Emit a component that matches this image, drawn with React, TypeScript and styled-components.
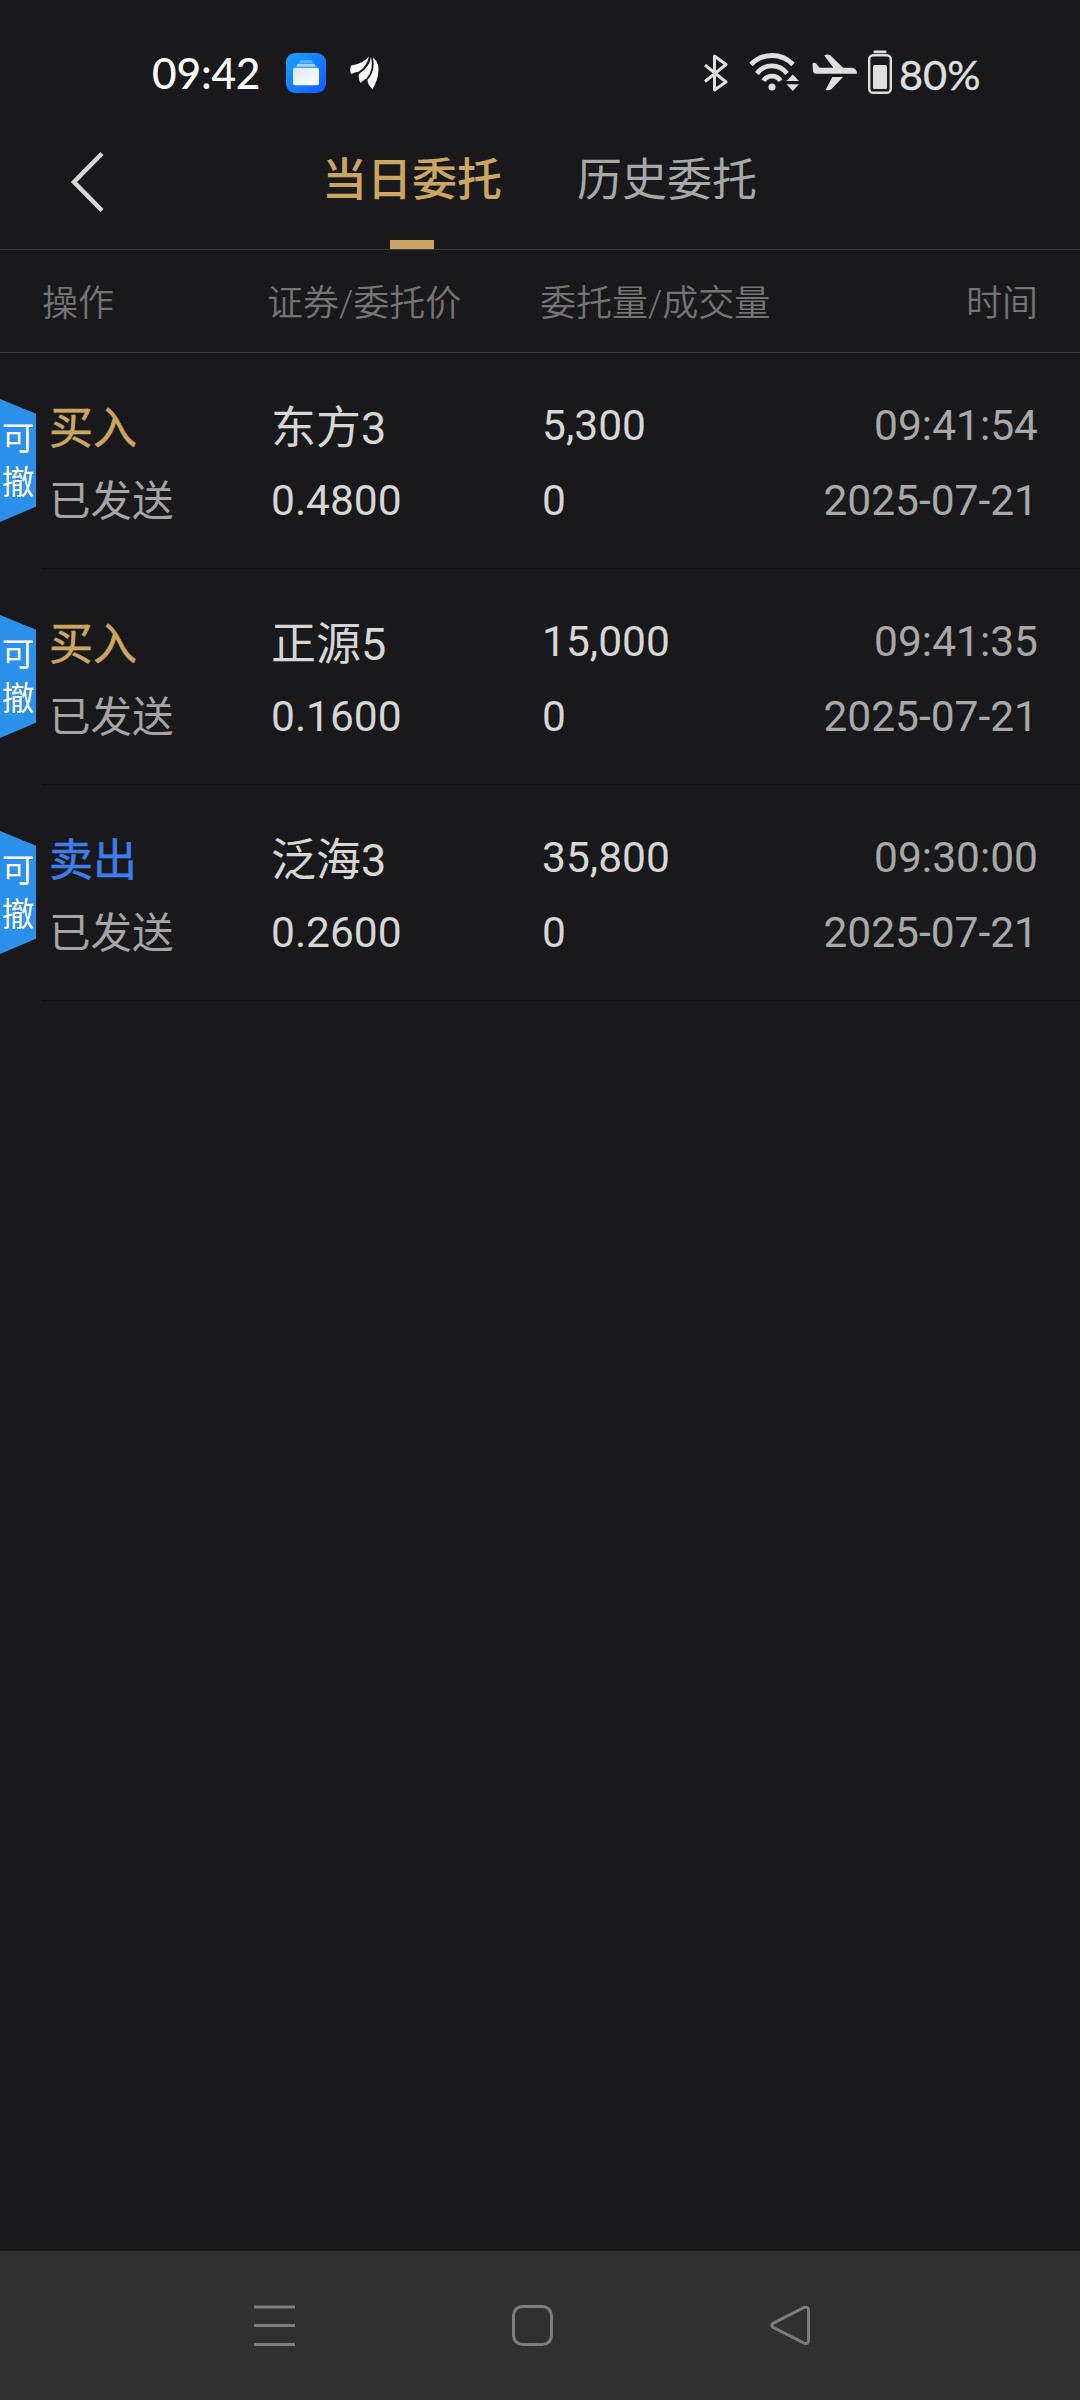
import React from "react";
import styled, { createGlobalStyle } from "styled-components";

const GlobalStyle = createGlobalStyle`
  * { box-sizing: border-box; }
  body { margin: 0; background: #19191b; }
`;

const Screen = styled.div`
  display: flex;
  flex-direction: column;
  width: 1080px;
  height: 2400px;
  background: #19191b;
  color: #d6d6d6;
  font-family: Roboto, "Noto Sans CJK SC", sans-serif;
`;

const StatusBar = styled.header`
  display: flex;
  align-items: flex-start;
  justify-content: space-between;
  height: 120px;
  padding: 46px 99px 0 152px;
  font-family: Lato, sans-serif;
  font-size: 42px;
  line-height: 56px;
`;

const StatusGroup = styled.div`
  display: flex;
  align-items: center;
  height: 54px;
`;

const Clock = styled.span`
  width: 134px;
  color: #fff;
  font-size: 42.5px;
  font-weight: 500;
  letter-spacing: -0.2px;
`;

const Battery = styled.span`
  width: 82px;
  padding-top: 2px;
  color: #dfdfdf;
  font-size: 41.5px;
  white-space: nowrap;
  -webkit-text-stroke: 0.4px currentColor;
`;

const Glyph = styled.svg<{ $gap?: number }>`
  display: block;
  flex: none;
  margin-right: ${(p) => p.$gap ?? 0}px;
`;

const TitleBar = styled.nav`
  display: flex;
  height: 130px;
  padding-left: 67px;
  border-bottom: 1px solid #3b3b3b;
`;

const Back = styled.button`
  display: flex;
  width: 255px;
  padding: 30px 0 0;
  border: 0;
  background: none;
`;

const Tab = styled.div<{ $active?: boolean }>`
  display: flex;
  flex-direction: column;
  align-items: center;
  justify-content: space-between;
  width: 180px;
  margin-right: 75px;
  padding-top: 30px;
  color: ${(p) => (p.$active ? "#cba663" : "#a8a8a8")};
  font-size: 45px;
  font-weight: ${(p) => (p.$active ? 500 : 400)};
  line-height: 62px;
  white-space: nowrap;
`;

const Indicator = styled.i`
  width: 44px;
  height: 9px;
  background: #cba663;
`;

const Columns = styled.div`
  display: grid;
  grid-template-columns: 225px 273px 1fr auto;
  align-items: center;
  height: 103px;
  padding: 5px 42px 0;
  border-bottom: 1px solid #3b3b3b;
  color: #747474;
  font-size: 36px;
  font-weight: 350;
  line-height: 50px;
`;

const Orders = styled.main`
  flex: 1;
`;

const Order = styled.article`
  display: flex;
  height: 216px;
`;

const Cancel = styled.button`
  display: flex;
  flex-direction: column;
  align-items: center;
  width: 36px;
  height: 123px;
  margin: 46px 6px 0 0;
  padding: 15px 0 0;
  border: 0;
  background: #2a90ea;
  clip-path: polygon(0 0, 100% 12%, 100% 87.5%, 0 100%);
  color: #fff;
  font: 400 32.5px/44px "Noto Sans CJK SC", sans-serif;
`;

const Fields = styled.div`
  display: grid;
  flex: 1;
  grid-template-columns: 222px 271px 1fr auto;
  grid-template-rows: 75px 75px;
  align-content: start;
  align-items: center;
  padding: 35px 42px 0 7px;
  border-bottom: 1px solid #101113;
  font-size: 42.5px;
  line-height: 60px;
`;

const Side = styled.strong<{ $sell?: boolean }>`
  padding-top: 7px;
  color: ${(p) => (p.$sell ? "#3d7eea" : "#cba663")};
  font-size: 44px;
  font-weight: 400;
  -webkit-text-stroke: 0.6px currentColor;
`;

const Name = styled.span`
  padding-top: 7px;
  font-size: 45px;
`;

const State = styled.span`
  padding-top: 2px;
  color: #a5a5a5;
  font-size: 41.5px;
`;

const Stamp = styled.time`
  color: #a8a8a8;
  text-align: right;
`;

const NavBar = styled.footer`
  display: flex;
  align-items: center;
  height: 149px;
  padding: 1px 0 0 253px;
  background: #303030;
`;

const orders = [
  { side: "买入", name: "东方3", price: "0.4800", amount: "5,300", time: "09:41:54" },
  { side: "买入", name: "正源5", price: "0.1600", amount: "15,000", time: "09:41:35" },
  { side: "卖出", name: "泛海3", price: "0.2600", amount: "35,800", time: "09:30:00" },
];

export default function App() {
  return (
    <Screen>
      <GlobalStyle />
      <StatusBar>
        <StatusGroup>
          <Clock>09:42</Clock>
          <Glyph width="40" height="40" viewBox="0 0 40 40" $gap={24}>
            <defs>
              <linearGradient id="app" x1="0" y1="0" x2="1" y2="1">
                <stop offset="0" stopColor="#18a4ff" />
                <stop offset="1" stopColor="#1258ff" />
              </linearGradient>
              <linearGradient id="card" x1="0" y1="0" x2="1" y2="1">
                <stop offset="0" stopColor="#d8e8ff" />
                <stop offset="1" stopColor="#ffffff" />
              </linearGradient>
            </defs>
            <rect width="40" height="40" rx="9" fill="url(#app)" />
            <path d="M15 7h10q1.500 0 1.500 3h-13q0-3 1.500-3z" fill="#57b0ff" />
            <path d="M12.500 10.700h15q2 0 2 3h-19q0-3 2-3z" fill="#a5d3ff" />
            <rect x="7" y="14.700" width="26" height="17.500" rx="2" fill="url(#card)" />
          </Glyph>
          <Glyph width="29" height="34" viewBox="0 0 29 34">
            <path d="M19 0.500C12 8 5 8.500 1 9.500Q-0.500 14 1 18Q5 16 9 15.500Q17 10 19 0.500z" fill="#fff" />
            <path d="M21 0.500Q20 11 9 18Q8 22 10.500 27Q13 24 16.500 22.500Q24 14 21 0.500z" fill="#fff" />
            <path d="M22.800 1.500Q26 14 17.500 24Q17.500 28.500 22.500 33Q30 21 28 9Q26.500 4 22.800 1.500z" fill="#fff" />
          </Glyph>
        </StatusGroup>
        <StatusGroup>
          <Glyph width="26" height="38" viewBox="0 0 26 38" $gap={19}>
            <path d="M2 11L23 28L11.500 36V2L23 10.500L2 27.500" fill="none" stroke="#dfdfdf" strokeWidth="3" strokeLinejoin="round" />
          </Glyph>
          <Glyph width="52" height="42" viewBox="0 0 52 42" $gap={12}>
            <path d="M3 12.500A29 29 0 0 1 45 12.500M9 21.500A18.600 18.600 0 0 1 39 21.500M15.500 28.800A10 10 0 0 1 32.500 28.800" fill="none" stroke="#dfdfdf" strokeWidth="4.800" />
            <circle cx="24" cy="35" r="3.500" fill="#dfdfdf" />
            <path d="M38.500 29L44.800 22.500L51 29zM38.500 32.300H51L44.800 39z" fill="#dfdfdf" />
          </Glyph>
          <Glyph width="45" height="38" viewBox="0 0 45 38" $gap={11}>
            <path d="M0.500 9.500Q2.500 8 4 9.500L7.700 13.700H21.300L12.300 1.500Q15.500 -0.500 18.500 1.500L31 13.700H40Q45 14.500 45 19.700H4Q1.500 19.700 1 17.500zM20.300 23H31L19 35.500Q16.500 37 13.700 35.800z" fill="#dfdfdf" />
          </Glyph>
          <Glyph width="24" height="46" viewBox="0 0 24 46" $gap={7}>
            <rect x="5.500" y="0.500" width="13" height="2.800" rx="1" fill="#dfdfdf" />
            <rect x="1.200" y="5.200" width="21.600" height="37.600" rx="4" fill="none" stroke="#dfdfdf" strokeWidth="2.400" />
            <rect x="5" y="15" width="14" height="24" rx="1.500" fill="#dfdfdf" />
          </Glyph>
          <Battery>80%</Battery>
        </StatusGroup>
      </StatusBar>
      <TitleBar>
        <Back aria-label="返回">
          <Glyph width="40" height="62" viewBox="0 0 40 62">
            <path d="M35 3.500L7 32L35 60.500" fill="none" stroke="#d6d6d6" strokeWidth="4.500" />
          </Glyph>
        </Back>
        <Tab $active>
          当日委托
          <Indicator />
        </Tab>
        <Tab>历史委托</Tab>
      </TitleBar>
      <Columns>
        <span>操作</span>
        <span>证券/委托价</span>
        <span>委托量/成交量</span>
        <span>时间</span>
      </Columns>
      <Orders>
        {orders.map((o) => (
          <Order key={o.time}>
            <Cancel>
              <span>可</span>
              <span>撤</span>
            </Cancel>
            <Fields>
              <Side $sell={o.side === "卖出"}>{o.side}</Side>
              <Name>{o.name}</Name>
              <span>{o.amount}</span>
              <Stamp>{o.time}</Stamp>
              <State>已发送</State>
              <span>{o.price}</span>
              <span>0</span>
              <Stamp>2025-07-21</Stamp>
            </Fields>
          </Order>
        ))}
      </Orders>
      <NavBar>
        <Glyph width="43" height="42" viewBox="0 0 43 42" $gap={216}>
          <path d="M1 2h41M1 20.500h41M1 39.500h41" stroke="#7d7d7d" strokeWidth="3" />
        </Glyph>
        <Glyph width="41" height="42" viewBox="0 0 41 42" $gap={217}>
          <rect x="1.500" y="1.500" width="38" height="38" rx="9" fill="none" stroke="#7d7d7d" strokeWidth="3" />
        </Glyph>
        <Glyph width="41" height="42" viewBox="0 0 41 42">
          <path d="M34 2.500L3 18.300q-2.500 2 0 4L34 38.200q4.500 1.500 4.500-3V5.500q0-4.500-4.500-3z" fill="none" stroke="#7d7d7d" strokeWidth="3" />
        </Glyph>
      </NavBar>
    </Screen>
  );
}
